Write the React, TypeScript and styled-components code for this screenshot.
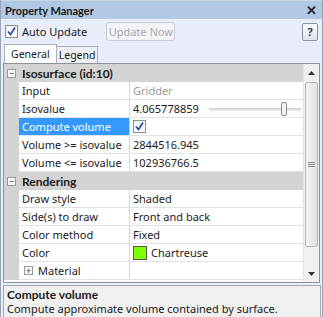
import React, { useState } from "react";
import styled, { createGlobalStyle } from "styled-components";

const GlobalStyle = createGlobalStyle`
  html, body {
    margin: 0;
    padding: 0;
    background: #ffffff;
  }
  * {
    box-sizing: border-box;
  }
`;

const boldFont = `"Lato", "Noto Sans", sans-serif`;

const Window = styled.div`
  width: 323px;
  height: 317px;
  display: flex;
  flex-direction: column;
  background: #e9edf9;
  border-left: 1px solid #9aa3b1;
  border-right: 1px solid #9aa3b1;
  font-family: "Noto Sans", "Open Sans", sans-serif;
  font-size: 11px;
  color: #1b1b1b;
  overflow: hidden;
`;

const TitleBar = styled.div`
  height: 19px;
  flex: none;
  display: flex;
  align-items: center;
  justify-content: space-between;
  padding: 0 5px 0 4px;
  background: #b1c8e4;
  border-top: 1px solid #c9d6e8;
  font-family: ${boldFont};
  font-size: 11px;
  font-weight: 700;
  color: #1a1a1a;
`;

const CloseGlyph = styled.span`
  font-size: 13px;
  font-weight: 700;
  line-height: 1;
  color: #222;
`;

const Toolbar = styled.div`
  height: 23px;
  flex: none;
  display: flex;
  align-items: center;
  padding: 0 4px 0 4px;
  margin-top: 1px;
`;

const Check = styled.span<{ checked: boolean }>`
  width: 13px;
  height: 13px;
  flex: none;
  display: inline-flex;
  align-items: center;
  justify-content: center;
  border: 1px solid #8e8f8f;
  background: linear-gradient(#f4f4f4, #ffffff);
  svg {
    visibility: ${({ checked }) => (checked ? "visible" : "hidden")};
  }
`;

const CheckLabel = styled.label`
  display: flex;
  align-items: center;
  gap: 4px;
  font-size: 11px;
  cursor: pointer;
`;

const UpdateButton = styled.button`
  margin-left: 19px;
  height: 19px;
  width: 69px;
  padding: 0;
  border: 1px solid #c9cdd6;
  border-radius: 3px;
  background: #f3f4f8;
  color: #a6a9b0;
  font: inherit;
  font-size: 11px;
`;

const HelpButton = styled.button`
  margin-left: auto;
  width: 16px;
  height: 18px;
  padding: 0;
  border: 1px solid #8d9199;
  border-radius: 2px;
  background: linear-gradient(#ffffff, #dfe2e8);
  font: inherit;
  font-weight: 700;
  font-size: 11px;
  color: #3a3a3a;
`;

const TabStrip = styled.div`
  height: 19px;
  flex: none;
  display: flex;
  align-items: flex-end;
  padding-left: 3px;
  margin-top: 1px;
`;

const Tab = styled.div<{ active: boolean }>`
  height: ${({ active }) => (active ? "19px" : "17px")};
  display: flex;
  align-items: center;
  padding: 0 ${({ active }) => (active ? "6px" : "2px")};
  background: ${({ active }) => (active ? "#ffffff" : "#eef0f4")};
  border: 1px solid #a9aeb8;
  border-bottom: none;
  margin-right: -1px;
  font-size: 10.5px;
`;

const GridFrame = styled.div`
  height: 220px;
  flex: none;
  margin: 0 2px 0 2px;
  display: flex;
  border: 1px solid #8c919a;
  background: #ffffff;
`;

const GridBody = styled.div`
  flex: 1;
  display: grid;
  grid-template-columns: 15px 111px 1fr;
  grid-auto-rows: 18px;
  align-content: start;
  overflow: hidden;
`;

const CategoryRow = styled.div`
  grid-column: 1 / -1;
  display: flex;
  align-items: center;
  gap: 6px;
  padding-left: 3px;
  background: #d3d3d3;
  font-family: ${boldFont};
  font-size: 12px;
  font-weight: 700;
`;

const Margin = styled.div`
  background: #d3d3d3;
`;

const NameCell = styled.div<{ selected?: boolean; indent?: boolean }>`
  display: flex;
  align-items: center;
  gap: 5px;
  padding-left: ${({ indent }) => (indent ? "5px" : "3px")};
  background: ${({ selected }) => (selected ? "#3399ff" : "#ffffff")};
  color: ${({ selected }) => (selected ? "#ffffff" : "inherit")};
  border-bottom: 1px solid #e2e2e2;
  border-right: 1px solid #d5d5d5;
  white-space: nowrap;
`;

const ValueCell = styled.div<{ muted?: boolean }>`
  display: flex;
  align-items: center;
  gap: 4px;
  padding-left: 3px;
  border-bottom: 1px solid #e2e2e2;
  color: ${({ muted }) => (muted ? "#9a9a9a" : "inherit")};
  white-space: nowrap;
  min-width: 0;
`;

const ExpandBox = styled.span`
  width: 9px;
  height: 9px;
  flex: none;
  display: inline-flex;
  align-items: center;
  justify-content: center;
  border: 1px solid #9a9a9a;
  background: #f8f8f8;
  font-family: "Noto Sans", sans-serif;
  font-size: 9px;
  font-weight: 400;
  line-height: 1;
  color: #444;
`;

const Slider = styled.div`
  position: relative;
  flex: 1;
  height: 18px;
  margin-left: 6px;
  margin-right: 2px;
  &::before {
    content: "";
    position: absolute;
    left: 0;
    right: 0;
    top: 8px;
    height: 2px;
    background: #e4e4e4;
    border-top: 1px solid #d0d0d0;
  }
`;

const SliderThumb = styled.span`
  position: absolute;
  top: 2px;
  width: 6px;
  height: 14px;
  border: 1px solid #8a8a8a;
  border-radius: 2px;
  background: #f2f2f2;
`;

const Swatch = styled.span<{ color: string }>`
  width: 14px;
  height: 14px;
  border: 1px solid #555;
  background: ${({ color }) => color};
`;

const ScrollBar = styled.div`
  width: 16px;
  flex: none;
  display: flex;
  flex-direction: column;
  background: #f0f0f0;
  border-left: 1px solid #e3e3e3;
`;

const ScrollArrow = styled.div`
  height: 17px;
  flex: none;
  display: flex;
  align-items: center;
  justify-content: center;
`;

const ScrollThumb = styled.div`
  margin: 1px 1px;
  height: 165px;
  display: flex;
  align-items: center;
  justify-content: center;
  border: 1px solid #b5b5b5;
  border-radius: 2px;
  background: linear-gradient(90deg, #f3f3f3, #e2e2e2);
`;

const Description = styled.div`
  flex: 1;
  margin: 2px 1px 0 2px;
  padding: 1px 3px;
  background: #f0f0f0;
  border: 1px solid #a5a8ad;
  border-bottom: none;
  overflow: hidden;
`;

const DescTitle = styled.div`
  font-family: ${boldFont};
  font-weight: 700;
  font-size: 12px;
  line-height: 15px;
`;

const DescText = styled.div`
  line-height: 14px;
`;

function Tick() {
  return (
    <svg width="11" height="11" viewBox="0 0 11 11">
      <path d="M2 5.5 L4.5 8.5 L9 1.5" fill="none" stroke="#2d4fa3" strokeWidth="1.8" />
    </svg>
  );
}

function Triangle({ down }: { down?: boolean }) {
  return (
    <svg width="7" height="4" viewBox="0 0 7 4">
      <path d={down ? "M0 0 H7 L3.5 4 Z" : "M0 4 H7 L3.5 0 Z"} fill="#333" />
    </svg>
  );
}

function Grip() {
  return (
    <svg width="7" height="6" viewBox="0 0 7 6">
      <path d="M0 0.5 H7 M0 2.5 H7 M0 4.5 H7" stroke="#8a8a8a" strokeWidth="1" />
    </svg>
  );
}

export default function App() {
  const [autoUpdate, setAutoUpdate] = useState(true);
  const [tab, setTab] = useState("General");

  return (
    <>
      <GlobalStyle />
      <Window>
        <TitleBar>
          <span>Property Manager</span>
          <CloseGlyph>✕</CloseGlyph>
        </TitleBar>

        <Toolbar>
          <CheckLabel onClick={() => setAutoUpdate(!autoUpdate)}>
            <Check checked={autoUpdate}>
              <Tick />
            </Check>
            Auto Update
          </CheckLabel>
          <UpdateButton disabled>Update Now</UpdateButton>
          <HelpButton>?</HelpButton>
        </Toolbar>

        <TabStrip>
          {["General", "Legend"].map((t) => (
            <Tab key={t} active={tab === t} onClick={() => setTab(t)}>
              {t}
            </Tab>
          ))}
        </TabStrip>

        <GridFrame>
          <GridBody>
            <CategoryRow>
              <ExpandBox>−</ExpandBox>
              Isosurface (id:10)
            </CategoryRow>

            <Margin />
            <NameCell>Input</NameCell>
            <ValueCell muted>Gridder</ValueCell>

            <Margin />
            <NameCell>Isovalue</NameCell>
            <ValueCell>
              4.065778859
              <Slider>
                <SliderThumb style={{ left: "78%" }} />
              </Slider>
            </ValueCell>

            <Margin />
            <NameCell selected>Compute volume</NameCell>
            <ValueCell>
              <Check checked>
                <Tick />
              </Check>
            </ValueCell>

            <Margin />
            <NameCell>Volume &gt;= isovalue</NameCell>
            <ValueCell>2844516.945</ValueCell>

            <Margin />
            <NameCell>Volume &lt;= isovalue</NameCell>
            <ValueCell>102936766.5</ValueCell>

            <CategoryRow>
              <ExpandBox>−</ExpandBox>
              Rendering
            </CategoryRow>

            <Margin />
            <NameCell>Draw style</NameCell>
            <ValueCell>Shaded</ValueCell>

            <Margin />
            <NameCell>Side(s) to draw</NameCell>
            <ValueCell>Front and back</ValueCell>

            <Margin />
            <NameCell>Color method</NameCell>
            <ValueCell>Fixed</ValueCell>

            <Margin />
            <NameCell>Color</NameCell>
            <ValueCell>
              <Swatch color="#7fff00" />
              Chartreuse
            </ValueCell>

            <Margin />
            <NameCell indent>
              <ExpandBox>+</ExpandBox>
              Material
            </NameCell>
            <ValueCell />
          </GridBody>

          <ScrollBar>
            <ScrollArrow>
              <Triangle />
            </ScrollArrow>
            <ScrollThumb>
              <Grip />
            </ScrollThumb>
            <ScrollArrow style={{ marginTop: "auto" }}>
              <Triangle down />
            </ScrollArrow>
          </ScrollBar>
        </GridFrame>

        <Description>
          <DescTitle>Compute volume</DescTitle>
          <DescText>Compute approximate volume contained by surface.</DescText>
        </Description>
      </Window>
    </>
  );
}
